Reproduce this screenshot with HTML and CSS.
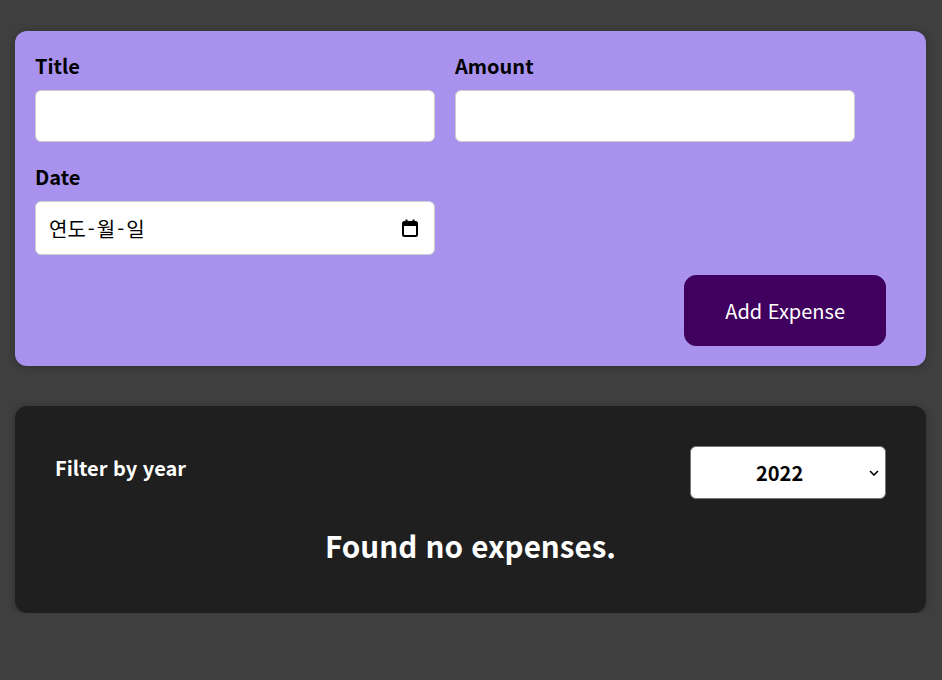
FILE: index.html
```html
<!DOCTYPE html>
<html lang="ko">
<head>
<meta charset="utf-8">
<title>Expenses</title>
<link rel="stylesheet" href="styles.css">
</head>
<body>
<div class="app">
  <div class="new-expense">
    <form class="form">
      <div class="controls">
        <div class="control">
          <label>Title</label>
          <input type="text">
        </div>
        <div class="control">
          <label>Amount</label>
          <input type="number">
        </div>
        <div class="control">
          <label>Date</label>
          <div class="date-input">
            <span class="date-text">연도<span class="sep">-</span>월<span class="sep">-</span>일</span>
            <svg class="cal" width="16" height="18" viewBox="0 0 16 18" aria-hidden="true">
              <rect x="1" y="3" width="14" height="14" rx="1.5" fill="none" stroke="#000" stroke-width="2"/>
              <rect x="1" y="3" width="14" height="4" fill="#000"/>
              <rect x="3.5" y="0.5" width="2" height="3" fill="#000"/>
              <rect x="10.5" y="0.5" width="2" height="3" fill="#000"/>
            </svg>
          </div>
        </div>
      </div>
      <div class="actions">
        <button type="button" class="add-btn">Add Expense</button>
      </div>
    </form>
  </div>
  <div class="expenses">
    <div class="filter">
      <div class="filter-control">
        <label>Filter by year</label>
        <div class="select-wrap">
          <select>
            <option>2022</option>
            <option>2021</option>
            <option>2020</option>
            <option>2019</option>
          </select>
          <svg class="chev" width="10" height="6" viewBox="0 0 10 6" aria-hidden="true">
            <path d="M1 1 L5 5 L9 1" fill="none" stroke="#000" stroke-width="1.6"/>
          </svg>
        </div>
      </div>
    </div>
    <h2 class="fallback">Found no expenses.</h2>
  </div>
</div>
</body>
</html>
```
FILE: styles.css
```css
* { box-sizing: border-box; }
html {
  font-family: "Noto Sans CJK KR", "Noto Sans", sans-serif;
  font-size: 20px;
}
body {
  margin: 0;
  background-color: #3f3f3f;
}
.app {
  padding: 31px 16px 0 15px;
  display: flex;
  flex-direction: column;
  gap: 40px;
}
.new-expense {
  background-color: #a892ee;
  padding: 20px;
  border-radius: 12px;
  box-shadow: 0 1px 8px rgba(0, 0, 0, 0.25);
}
.controls {
  display: flex;
  flex-wrap: wrap;
  gap: 20px;
  margin-bottom: 20px;
}
.control label {
  display: block;
  font-weight: bold;
  margin-bottom: 10px;
  color: #000;
}
.control input, .date-input {
  font: inherit;
  padding: 10px;
  border-radius: 6px;
  border: 1px solid #ccc;
  width: 400px;
  height: 52px;
  background: #fff;
  display: block;
}
.date-input {
  display: flex;
  align-items: center;
  justify-content: space-between;
  padding: 10px 16px 10px 13px;
  height: 54px;
}
.date-text {
  color: #000;
  font-family: "Noto Sans CJK KR", sans-serif;
  font-weight: 400;
}
.sep { margin: 0 2px; }
.cal { display: block; }
.actions { text-align: right; }
.add-btn {
  font: inherit;
  cursor: pointer;
  padding: 20px 40px;
  border: 1px solid #40005d;
  background-color: #40005d;
  color: #fff;
  border-radius: 12px;
  margin-right: 20px;
}
.expenses {
  background-color: #1f1f1f;
  padding: 20px;
  border-radius: 12px;
  box-shadow: 0 1px 8px rgba(0, 0, 0, 0.25);
}
.filter {
  color: #fff;
  padding: 0 20px;
}
.filter-control {
  display: flex;
  align-items: center;
  justify-content: space-between;
  margin: 20px 0;
}
.filter-control label {
  font-weight: bold;
  margin-bottom: 10px;
}
.select-wrap {
  display: block;
  position: relative;
}
.filter-control select {
  appearance: none;
  -webkit-appearance: none;
  font: inherit;
  font-weight: bold;
  padding: 10px 60px 10px 65px;
  border-radius: 6px;
  border: 1px solid #767676;
  background: #fff;
  color: #000;
  width: 196px;
  height: 53px;
  display: block;
}
.chev {
  position: absolute;
  right: 7px;
  top: 24px;
  pointer-events: none;
}
.fallback {
  color: #fff;
  text-align: center;
  font-size: 29.6px;
  line-height: 44px;
  margin: 25px 0;
}
```
